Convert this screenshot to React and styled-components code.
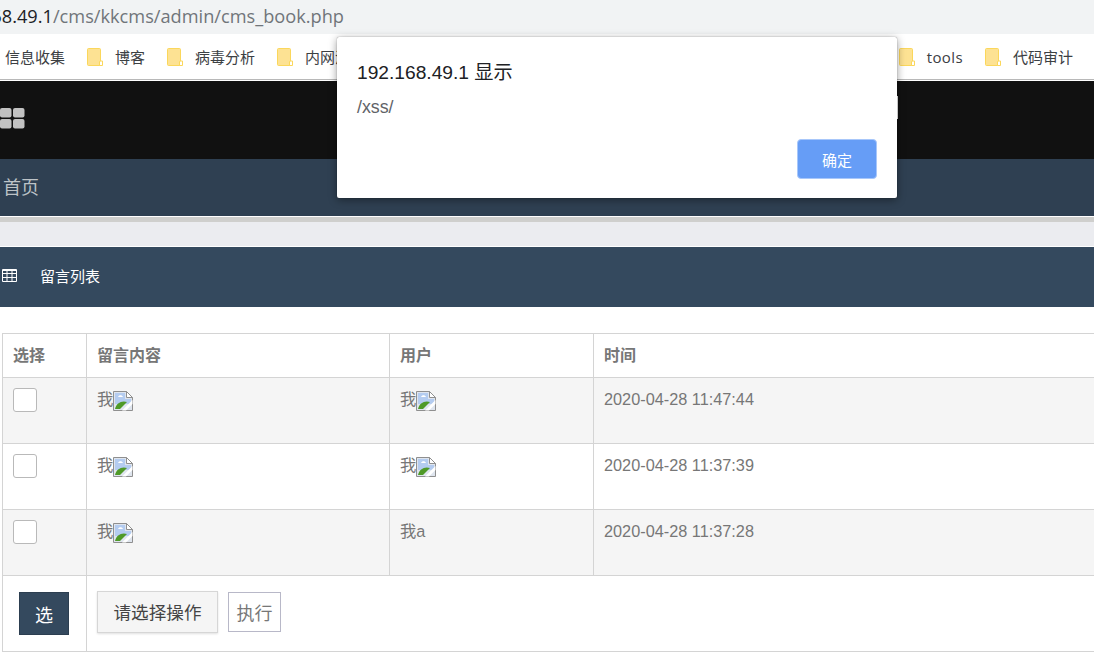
import React from "react";
import styled, { createGlobalStyle } from "styled-components";

const sans = `"Liberation Sans", "Noto Sans CJK SC", sans-serif`;
const chrome = `"Open Sans", "Noto Sans CJK SC", sans-serif`;

const GlobalStyle = createGlobalStyle`
  html, body {
    margin: 0;
    padding: 0;
    height: 100%;
    overflow: hidden;
    background: #fff;
    font-family: ${sans};
  }
`;

const Page = styled.div`
  position: relative;
  width: 1094px;
  height: 652px;
  overflow: hidden;
`;

const AddressBar = styled.div`
  height: 34px;
  background: #f1f3f4;
  display: flex;
  align-items: center;
  padding-bottom: 3px;
  box-sizing: border-box;
  font-family: ${chrome};
  font-size: 18.2px;
  color: #70757a;
  white-space: nowrap;
`;

const Host = styled.span`
  color: #202124;
  margin-left: -55px;
`;

const BookmarkBar = styled.div`
  height: 46px;
  box-sizing: border-box;
  background: #fff;
  border-bottom: 1px solid #b8b8b8;
  display: flex;
  align-items: center;
  padding-left: 5px;
  font-family: ${chrome};
  font-size: 15px;
  color: #3c4043;
`;

const Bookmark = styled.div`
  display: flex;
  align-items: center;
  flex-shrink: 0;
  gap: 12px;
  margin-right: ${(p) => (p.$last ? 21 : 22)}px;
  letter-spacing: ${(p) => (p.$latin ? "0.4px" : "0")};
`;

const BookmarkSpacer = styled.div`
  flex: 1;
`;

const TopBar = styled.div`
  height: 78px;
  margin-top: 1px;
  background: #111;
  display: flex;
  align-items: center;
`;

const GridSvg = styled.svg`
  margin-bottom: 4px;
`;

const SearchBox = styled.div`
  width: 120px;
  height: 23px;
  margin: 0 196px 26px auto;
  background: #fff;
`;

const NavBar = styled.div`
  height: 57px;
  box-sizing: border-box;
  background: #2f4052;
  display: flex;
  align-items: center;
  padding: 0 0 4px 3px;
  font-size: 18px;
  color: #bdc3c7;
`;

const Divider = styled.div`
  height: 5px;
  margin-top: 1px;
  background: #cfcfcd;
`;

const Band = styled.div`
  height: 24px;
  background: #ebecf0;
`;

const PanelHeader = styled.div`
  height: 60px;
  box-sizing: border-box;
  margin-top: 1px;
  background: #34495e;
  display: flex;
  align-items: center;
  padding: 0 0 4px 2px;
  gap: 23px;
  font-size: 15px;
  color: #fff;
`;

const TableWrap = styled.div`
  padding: 26px 0 0 2px;
`;

const Table = styled.table`
  width: 1110px;
  table-layout: fixed;
  border-collapse: collapse;
  font-size: 16px;
  color: #777;
`;

const Row = styled.tr`
  height: ${(p) => p.$height}px;
  background: ${(p) => (p.$striped ? "#f5f5f5" : "#fff")};
`;

const HeadCell = styled.th`
  border: 1px solid #d4d4d4;
  padding: 0 10px 4px;
  text-align: left;
  vertical-align: middle;
  font-weight: 700;
  color: #777;
`;

const Cell = styled.td`
  border: 1px solid #d4d4d4;
  padding: 10px;
  vertical-align: top;
`;

const FooterCell = styled.td`
  border: 1px solid #d4d4d4;
  padding: 0 10px;
  vertical-align: middle;
`;

const CellText = styled.div`
  display: flex;
  align-items: flex-start;
  line-height: 22px;
  height: 24px;
  font-size: 16.3px;
`;

const CheckBox = styled.span`
  display: block;
  width: 22px;
  height: 22px;
  background: #fff;
  border: 1px solid #b9b9b9;
  border-radius: 3px;
`;

const SelectButton = styled.button`
  display: block;
  width: 50px;
  height: 43px;
  margin-left: 6px;
  background: #34495e;
  border: 1px solid #2c3e50;
  color: #fff;
  font-family: ${sans};
  font-size: 18px;
  padding: 0;
`;

const Actions = styled.div`
  display: flex;
  align-items: center;
  gap: 10px;
  padding-bottom: 4px;
`;

const ActionSelect = styled.div`
  width: 121px;
  height: 42px;
  box-sizing: border-box;
  background: #f5f5f5;
  border: 1px solid #d6d6d6;
  box-shadow: 0 1px 2px rgba(0, 0, 0, 0.12);
  display: flex;
  align-items: center;
  justify-content: center;
  font-size: 17.6px;
  color: #444;
`;

const RunButton = styled.button`
  width: 53px;
  height: 40px;
  background: #fff;
  border: 1px solid #b8b8c8;
  color: #777;
  font-family: ${sans};
  font-size: 18px;
  padding: 0;
`;

const Dialog = styled.div`
  position: absolute;
  top: 37px;
  left: 337px;
  width: 560px;
  height: 161px;
  box-sizing: border-box;
  padding: 24px 20px 19px;
  background: #fff;
  border-radius: 2px;
  box-shadow: 0 0 1px rgba(0, 0, 0, 0.55), 0 2px 8px rgba(0, 0, 0, 0.4);
  display: flex;
  flex-direction: column;
`;

const DialogTitle = styled.div`
  font-size: 19.2px;
  line-height: 24px;
  color: #202124;
`;

const DialogMessage = styled.div`
  margin-top: 12px;
  font-size: 17.8px;
  line-height: 20px;
  color: #5f6368;
`;

const DialogFooter = styled.div`
  margin-top: auto;
  display: flex;
  justify-content: flex-end;
`;

const ConfirmButton = styled.button`
  width: 80px;
  height: 40px;
  box-sizing: border-box;
  background: #669df6;
  border: 1px solid #a8c7fa;
  border-radius: 4px;
  color: #fff;
  font-family: ${sans};
  font-size: 15px;
  padding: 0;
`;

const BrokenWrap = styled.span`
  display: block;
  height: 20px;
  margin-top: 3px;
`;

const FolderIcon = () => (
  <svg width="16" height="18" viewBox="0 0 16 18">
    <path d="M1.5 0.5h11a1 1 0 0 1 1 1V17.5h-12a1 1 0 0 1-1-1V1.5a1 1 0 0 1 1-1z" fill="#fde293" stroke="#fbd75b" />
    <path d="M13 13h2.5v4.5H12.5V14z" fill="#fff" stroke="#fbd75b" />
  </svg>
);

const GridIcon = () => (
  <GridSvg width="25" height="21" viewBox="0 0 25 21">
    <rect x="0" y="0" width="11.5" height="9.5" rx="2" fill="#c2c2c2" />
    <rect x="13" y="0" width="11.5" height="9.5" rx="2" fill="#c2c2c2" />
    <rect x="0" y="11" width="11.5" height="9.5" rx="2" fill="#c2c2c2" />
    <rect x="13" y="11" width="11.5" height="9.5" rx="2" fill="#c2c2c2" />
  </GridSvg>
);

const TableIcon = () => (
  <svg width="15" height="13" viewBox="0 0 15 13" fill="none" stroke="#fff" strokeWidth="1">
    <path d="M0.5 0.5h14v12h-14z" />
    <path d="M0.5 1.5h14M0.5 4.5h14M0.5 8.5h14M5 1v11M10 1v11" />
  </svg>
);

const BrokenImage = () => (
  <BrokenWrap>
    <svg width="20" height="20" viewBox="0 0 20 20">
      <path d="M0.5 0.5h13l6 6v13h-19z" fill="#dfe5ee" stroke="#8f8f8f" />
      <path d="M13.5 0.5v6h6z" fill="#fff" stroke="#8f8f8f" />
      <path d="M2 2h10v6h6v5H2z" fill="#b4ccf0" />
      <path d="M5 6c1-2.5 4-2.5 5 0z" fill="#fff" />
      <path d="M2 18c1-6 7-9 12-7l-7 7z" fill="#4f9a28" />
      <path d="M9 19.5l10.5-10.5v4l-6.5 6.5z" fill="#fff" />
    </svg>
  </BrokenWrap>
);

const messages = [
  { user: "我", broken: true, time: "2020-04-28 11:47:44", striped: true },
  { user: "我", broken: true, time: "2020-04-28 11:37:39", striped: false },
  { user: "我a", broken: false, time: "2020-04-28 11:37:28", striped: true },
];

const App = () => {
  return (
    <Page>
      <GlobalStyle />
      <AddressBar>
        <Host>192.168.49.1</Host>/cms/kkcms/admin/cms_book.php
      </AddressBar>
      <BookmarkBar>
        <Bookmark>信息收集</Bookmark>
        <Bookmark><FolderIcon />博客</Bookmark>
        <Bookmark><FolderIcon />病毒分析</Bookmark>
        <Bookmark><FolderIcon />内网渗透</Bookmark>
        <BookmarkSpacer />
        <Bookmark $latin><FolderIcon />tools</Bookmark>
        <Bookmark $last><FolderIcon />代码审计</Bookmark>
      </BookmarkBar>
      <TopBar>
        <GridIcon />
        <SearchBox />
      </TopBar>
      <NavBar>首页</NavBar>
      <Divider />
      <Band />
      <PanelHeader>
        <TableIcon />
        留言列表
      </PanelHeader>
      <TableWrap>
        <Table>
          <colgroup>
            <col width="84" />
            <col width="303" />
            <col width="204" />
            <col />
          </colgroup>
          <thead>
            <Row $height={44}>
              <HeadCell>选择</HeadCell>
              <HeadCell>留言内容</HeadCell>
              <HeadCell>用户</HeadCell>
              <HeadCell>时间</HeadCell>
            </Row>
          </thead>
          <tbody>
            {messages.map((m) => (
              <Row key={m.time} $height={66} $striped={m.striped}>
                <Cell><CheckBox /></Cell>
                <Cell><CellText>我<BrokenImage /></CellText></Cell>
                <Cell><CellText>{m.user}{m.broken && <BrokenImage />}</CellText></Cell>
                <Cell><CellText>{m.time}</CellText></Cell>
              </Row>
            ))}
            <Row $height={76}>
              <FooterCell><SelectButton>选</SelectButton></FooterCell>
              <FooterCell colSpan={3}>
                <Actions>
                  <ActionSelect>请选择操作</ActionSelect>
                  <RunButton>执行</RunButton>
                </Actions>
              </FooterCell>
            </Row>
          </tbody>
        </Table>
      </TableWrap>
      <Dialog>
        <DialogTitle>192.168.49.1 显示</DialogTitle>
        <DialogMessage>/xss/</DialogMessage>
        <DialogFooter>
          <ConfirmButton>确定</ConfirmButton>
        </DialogFooter>
      </Dialog>
    </Page>
  );
};

export default App;
